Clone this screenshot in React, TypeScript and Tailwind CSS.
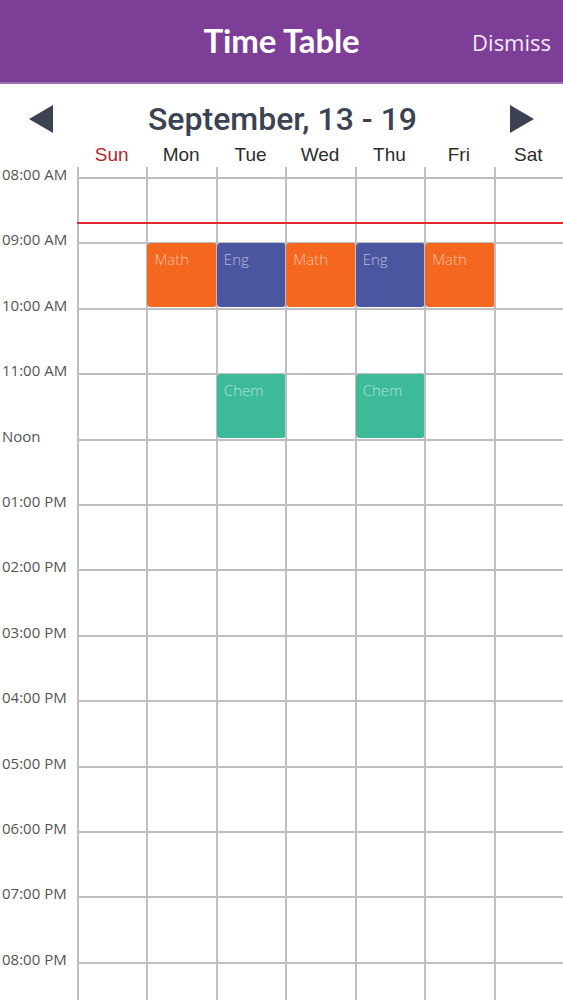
import React from "react";

const days = ["Sun", "Mon", "Tue", "Wed", "Thu", "Fri", "Sat"];

const hours = [
  "08:00 AM",
  "09:00 AM",
  "10:00 AM",
  "11:00 AM",
  "Noon",
  "01:00 PM",
  "02:00 PM",
  "03:00 PM",
  "04:00 PM",
  "05:00 PM",
  "06:00 PM",
  "07:00 PM",
  "08:00 PM",
];

type Lesson = { row: number; day: number; name: string; color: string };

// row = index in hours, day = index in days
const lessons: Lesson[] = [
  { row: 1, day: 1, name: "Math", color: "bg-[#f5661f]" },
  { row: 1, day: 2, name: "Eng", color: "bg-[#4b56a1]" },
  { row: 1, day: 3, name: "Math", color: "bg-[#f5661f]" },
  { row: 1, day: 4, name: "Eng", color: "bg-[#4b56a1]" },
  { row: 1, day: 5, name: "Math", color: "bg-[#f5661f]" },
  { row: 3, day: 2, name: "Chem", color: "bg-[#3dbb98]" },
  { row: 3, day: 4, name: "Chem", color: "bg-[#3dbb98]" },
];

function Arrow({ dir }: { dir: "left" | "right" }) {
  return (
    <svg width="26" height="30" viewBox="0 0 26 30">
      {dir === "left" ? (
        <polygon points="25,1 25,29 1,15" fill="#3b4252" />
      ) : (
        <polygon points="1,1 1,29 25,15" fill="#3b4252" />
      )}
    </svg>
  );
}

export default function App() {
  return (
    <div className="w-[563px] h-[1000px] overflow-hidden bg-white">
      {/* Header */}
      <div className="h-[84px] bg-[#7c3e97] border-b-2 border-[#9c70b4] flex items-center relative">
        <h1 className="flex-1 text-center text-white font-bold text-[33px] font-['Lato',sans-serif] tracking-[-0.2px]">
          Time Table
        </h1>
        <button className="absolute right-[12px] top-[26px] text-[22px] text-[#f3e9f7] font-['Open_Sans',sans-serif]">
          Dismiss
        </button>
      </div>

      {/* Week nav */}
      <div className="h-[60px] flex items-center justify-between px-[28px] pt-[10px]">
        <Arrow dir="left" />
        <span className="text-[32px] font-medium text-[#3b4252] font-['Roboto',sans-serif] pl-[2px]">
          September, 13 - 19
        </span>
        <Arrow dir="right" />
      </div>

      {/* Day names */}
      <div className="flex h-[23px] font-['Liberation_Sans',sans-serif]">
        <div className="w-[77px]" />
        <div className="flex-1 grid grid-cols-7">
          {days.map((d, i) => (
            <div
              key={d}
              className={`text-center text-[19px] leading-[22px] ${i === 0 ? "text-[#b0262b]" : "text-[#2c2c2c]"}`}
            >
              {d}
            </div>
          ))}
        </div>
      </div>

      {/* Grid */}
      <div className="flex relative">
        <div className="w-[77px] flex flex-col font-['Open_Sans',sans-serif] text-[15px] text-[#555] tracking-[0px]">
          {hours.map((h) => (
            <div key={h} className="h-[65.4px] shrink-0 pl-[2px] leading-[14px]">
              {h}
            </div>
          ))}
        </div>
        <div className="flex-1 flex flex-col">
          <div className="h-[10px] grid grid-cols-7">
            {days.map((d) => (
              <div key={d} className="border-l-2 border-[#bfbec3]" />
            ))}
          </div>
          {[...hours, ""].map((h, r) => (
            <div key={r} className="h-[65.4px] shrink-0 grid grid-cols-7 border-t-2 border-[#bfbec3]">
              {days.map((d, c) => {
                const l = lessons.find((x) => x.row === r && x.day === c);
                return (
                  <div key={d} className="border-l-2 border-[#bfbec3] relative">
                    {l && (
                      <div
                        className={`absolute -left-[1px] -right-[1px] -top-[1px] bottom-[1px] rounded-[4px] ${l.color} px-[7px] pt-[5px] text-[15px] font-light text-white/60 font-['Open_Sans',sans-serif]`}
                      >
                        {l.name}
                      </div>
                    )}
                  </div>
                );
              })}
            </div>
          ))}
        </div>
        {/* current time marker */}
        <div className="absolute left-[77px] right-0 top-[55px] h-[2px] bg-[#e0262d]" />
      </div>
    </div>
  );
}
